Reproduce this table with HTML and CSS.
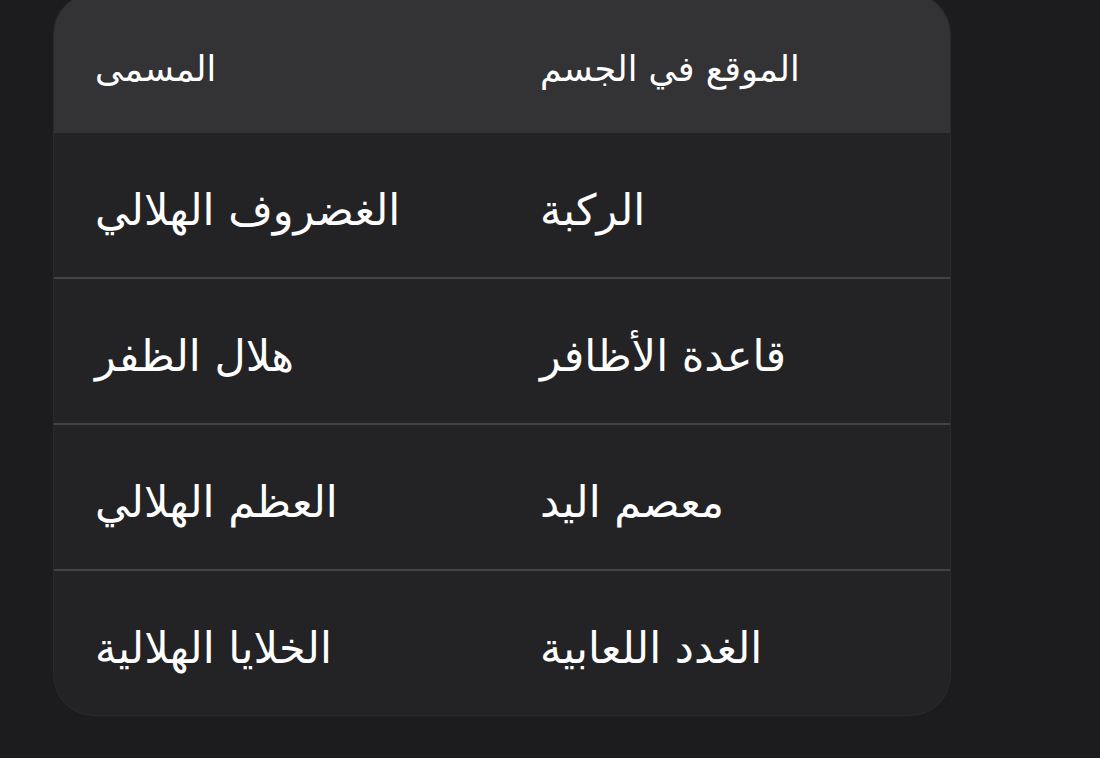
FILE: index.html
```html
<!DOCTYPE html>
<html lang="ar">
<head>
<meta charset="utf-8">
<link rel="stylesheet" href="styles.css">
</head>
<body>
<div class="card">
  <div class="row head">
    <div class="cell">المسمى</div>
    <div class="cell">الموقع في الجسم</div>
  </div>
  <div class="row">
    <div class="cell">الغضروف الهلالي</div>
    <div class="cell">الركبة</div>
  </div>
  <div class="row">
    <div class="cell">هلال الظفر</div>
    <div class="cell">قاعدة الأظافر</div>
  </div>
  <div class="row">
    <div class="cell">العظم الهلالي</div>
    <div class="cell">معصم اليد</div>
  </div>
  <div class="row last">
    <div class="cell">الخلايا الهلالية</div>
    <div class="cell">الغدد اللعابية</div>
  </div>
</div>
</body>
</html>
```
FILE: styles.css
```css
html, body {
  margin: 0;
  padding: 0;
  background: #1c1c1e;
  height: 758px;
  overflow: hidden;
}
body {
  font-family: "DejaVu Sans", sans-serif;
  color: #ffffff;
}
.card {
  margin: -6px 0 0 54px;
  width: 896px;
  background: #232325;
  border-radius: 40px;
  overflow: hidden;
  box-shadow: 0 0 0 1px #2a2a2c;
}
.row {
  display: grid;
  grid-template-columns: 446px 450px;
  height: 144px;
  border-bottom: 2px solid #434346;
  align-items: center;
}
.row.head {
  height: 139px;
  background: #333336;
  border-bottom: none;
}
.row.last {
  border-bottom: none;
}
.cell {
  padding-left: 41px;
  direction: rtl;
  text-align: left;
  font-size: 43px;
  display: flex;
  justify-content: flex-end;
  padding-top: 10px;
}
.row .cell + .cell {
  padding-left: 40px;
}
.head .cell {
  font-size: 35px;
  padding-top: 10px;
}
```
